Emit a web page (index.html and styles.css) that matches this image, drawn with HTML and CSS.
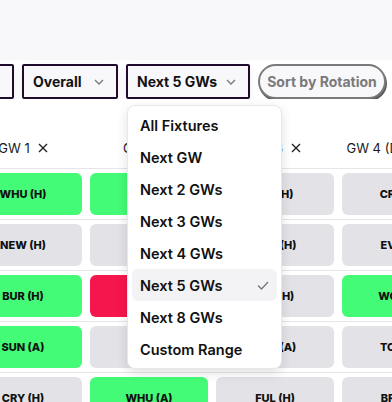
FILE: index.html
```html
<!DOCTYPE html>
<html lang="en">
  <head>
    <meta charset="UTF-8" />
    <meta name="viewport" content="width=device-width, initial-scale=1.0" />
    <title>Fixtures</title>
    <link rel="stylesheet" href="styles.css">
  </head>
  <body>
    <div class="topband"></div>

    <!-- filter buttons (scrolled sideways) -->
    <div class="toolbar-wrap">
      <div class="toolbar">
        <button class="select-btn teams">All Teams <svg class="chevron" viewBox="0 0 10 6"><path d="M1 1l4 4 4-4" /></svg></button>
        <button class="select-btn overall">Overall <svg class="chevron" viewBox="0 0 10 6"><path d="M1 1l4 4 4-4" /></svg></button>
        <button class="select-btn range">Next 5 GWs <svg class="chevron" viewBox="0 0 10 6"><path d="M1 1l4 4 4-4" /></svg></button>
        <button class="rotation-btn">Sort by Rotation</button>
      </div>
    </div>

    <!-- fixture grid -->
    <div class="fixtures-wrap">
      <div class="fixtures">
        <div class="row head">
          <div class="gw">GW 1 <svg class="close" viewBox="0 0 10 10"><path d="M1 1l8 8M9 1l-8 8" /></svg></div>
          <div class="gw">GW 2 <svg class="close" viewBox="0 0 10 10"><path d="M1 1l8 8M9 1l-8 8" /></svg></div>
          <div class="gw">GW 3 <svg class="close" viewBox="0 0 10 10"><path d="M1 1l8 8M9 1l-8 8" /></svg></div>
          <div class="gw">GW 4 (Double) <svg class="close" viewBox="0 0 10 10"><path d="M1 1l8 8M9 1l-8 8" /></svg></div>
        </div>
        <div class="row">
          <div class="cell easy">WHU (H)</div>
          <div class="cell easy">EVE (A)</div>
          <div class="cell mid">LIV (H)</div>
          <div class="cell mid">CRY (A)</div>
        </div>
        <div class="row">
          <div class="cell mid">NEW (H)</div>
          <div class="cell mid">ARS (A)</div>
          <div class="cell mid">BOU (H)</div>
          <div class="cell mid">EVE (H)</div>
        </div>
        <div class="row">
          <div class="cell easy">BUR (H)</div>
          <div class="cell hard">MCI (A)</div>
          <div class="cell mid">LEE (H)</div>
          <div class="cell easy">WOL (A)</div>
        </div>
        <div class="row">
          <div class="cell easy">SUN (A)</div>
          <div class="cell mid">CHE (H)</div>
          <div class="cell mid">NFO (A)</div>
          <div class="cell mid">TOT (A)</div>
        </div>
        <div class="row">
          <div class="cell mid">CRY (H)</div>
          <div class="cell easy">WHU (A)</div>
          <div class="cell mid">FUL (H)</div>
          <div class="cell mid">BRE (H)</div>
        </div>
      </div>
    </div>

    <!-- open dropdown of the "Next 5 GWs" button -->
    <ul class="menu">
      <li>All Fixtures</li>
      <li>Next GW</li>
      <li>Next 2 GWs</li>
      <li>Next 3 GWs</li>
      <li>Next 4 GWs</li>
      <li class="selected">Next 5 GWs <svg class="check" viewBox="0 0 12 9"><path d="M1 4.5l3.5 3.5L11 1" /></svg></li>
      <li>Next 8 GWs</li>
      <li>Custom Range</li>
    </ul>
  </body>
</html>
```

FILE: styles.css
```css
/* Page */
body {
  margin: 0;
  background-color: white;
  color: #111;
  font-family: Inter, "Noto Sans", sans-serif;
  overflow: hidden;
}

.topband {
  height: 60px;
  background-color: #f8f7fa;
}

/* Toolbar */
.toolbar-wrap {
  overflow: hidden;
  padding-top: 4px;
}

.toolbar {
  display: flex;
  gap: 8px;
  margin-left: -100px;
}

.select-btn {
  flex: none;
  display: flex;
  align-items: center;
  justify-content: space-between;
  height: 35px;
  padding: 0 12px 0 9px;
  border: 2px solid #1f0c2c;
  border-radius: 2px;
  background-color: #f8f7fa;
  color: #111;
  font-family: inherit;
  font-size: 14px;
  font-weight: 700;
  box-shadow: 0 4px 8px rgba(0, 0, 0, 0.08);
}

.select-btn.teams {
  width: 114px;
}

.select-btn.overall {
  width: 96px;
}

.select-btn.range {
  width: 124px;
}

.chevron {
  width: 10px;
  height: 6px;
  fill: none;
  stroke: #777;
  stroke-width: 1.3;
}

.rotation-btn {
  flex: none;
  height: 35px;
  width: 128px;
  padding: 0;
  border: 2px solid #7a7a7a;
  border-radius: 18px;
  background-color: #f8f7fa;
  color: #7a7a7a;
  font-family: inherit;
  font-size: 14px;
  font-weight: 700;
  white-space: nowrap;
  box-shadow: 1px 2px 0 #5c5c5c;
}

/* Fixture grid */
.fixtures-wrap {
  overflow: hidden;
  margin-top: 29px;
}

.fixtures {
  margin-left: -40px;
  width: 504px;
}

.row {
  display: grid;
  grid-template-columns: repeat(4, 126px);
  padding: 4px 0;
  border-bottom: 1px solid #e6e6e9;
}

.row.head {
  height: 40px;
  padding: 0;
  align-items: center;
}

.gw {
  display: flex;
  justify-content: center;
  align-items: center;
  gap: 8px;
  font-size: 13px;
  color: #1a1a1a;
  white-space: nowrap;
}

.close {
  width: 10px;
  height: 10px;
  fill: none;
  stroke: #222;
  stroke-width: 1.4;
}

.cell {
  height: 42px;
  margin: 0 4px;
  border-radius: 6px;
  display: flex;
  align-items: center;
  justify-content: center;
  font-size: 11px;
  font-weight: 800;
  color: #111;
}

.easy {
  background-color: #43fb76;
}

.mid {
  background-color: #e3e3e7;
}

.hard {
  background-color: #f5164d;
}

/* Dropdown menu */
.menu {
  position: absolute;
  top: 105px;
  left: 127px;
  box-sizing: border-box;
  width: 155px;
  margin: 0;
  padding: 3px 4px;
  list-style: none;
  background-color: white;
  border: 1px solid #e8e8ea;
  border-radius: 8px;
  box-shadow: 0 4px 12px rgba(0, 0, 0, 0.12);
}

.menu li {
  display: flex;
  align-items: center;
  justify-content: space-between;
  height: 32px;
  padding: 0 8px;
  border-radius: 6px;
  font-size: 14.5px;
  font-weight: 600;
  color: #111;
}

.menu li.selected {
  background-color: #f3f3f5;
}

.check {
  width: 12px;
  height: 9px;
  fill: none;
  stroke: #777;
  stroke-width: 1.3;
}
```
